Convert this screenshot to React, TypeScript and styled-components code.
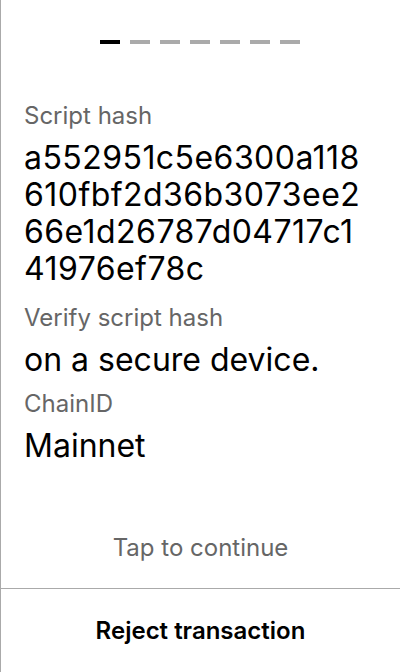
import styled, { createGlobalStyle } from 'styled-components';

const GlobalStyle = createGlobalStyle`
  html, body {
    margin: 0;
    padding: 0;
    background: #ffffff;
  }
  body {
    font-family: Inter, 'Noto Sans', sans-serif;
    -webkit-font-smoothing: antialiased;
  }
`;

const PAGE_COUNT = 7;
const ACTIVE_PAGE = 0;
const HASH_CHUNK = 18;

const scriptHash =
  'a552951c5e6300a118610fbf2d36b3073ee266e1d26787d04717c141976ef78c';

// the device shows the hash in fixed runs of 18 characters
const chunk = (s: string, n: number) => s.match(new RegExp(`.{1,${n}}`, 'g')) ?? [];

const fields = [
  { label: 'Verify script hash', value: 'on a secure device.' },
  { label: 'ChainID', value: 'Mainnet' },
];

const App = () => {
  return (
    <>
      <GlobalStyle />
      <Screen>
        <Pager>
          {Array.from({ length: PAGE_COUNT }).map((_, i) => (
            <PagerDash key={i} $active={i === ACTIVE_PAGE} />
          ))}
        </Pager>
        <Body>
          <Field>
            <FieldLabel>Script hash</FieldLabel>
            <HashValue>
              {chunk(scriptHash, HASH_CHUNK).map((line) => (
                <HashLine key={line}>{line}</HashLine>
              ))}
            </HashValue>
          </Field>
          {fields.map((f) => (
            <Field key={f.label}>
              <FieldLabel>{f.label}</FieldLabel>
              <FieldValue>{f.value}</FieldValue>
            </Field>
          ))}
        </Body>
        <Footer>
          <Hint>Tap to continue</Hint>
          <Divider />
          <RejectButton type="button">Reject transaction</RejectButton>
        </Footer>
      </Screen>
    </>
  );
};

const Screen = styled.div`
  width: 400px;
  height: 672px;
  box-sizing: border-box;
  border-left: 1px solid #aaaaaa;
  display: flex;
  flex-direction: column;
  background: #ffffff;
`;

const Pager = styled.div`
  display: flex;
  justify-content: center;
  gap: 10px;
  padding-top: 40px;
  margin-left: -1px;
`;

const PagerDash = styled.div<{ $active: boolean }>`
  width: 20px;
  height: 4px;
  background: ${(p) => (p.$active ? '#000000' : '#aaaaaa')};
`;

const Body = styled.div`
  flex: 1;
  display: flex;
  flex-direction: column;
  padding: 57px 23px 0;
  gap: 11px;
`;

const Field = styled.div`
  display: flex;
  flex-direction: column;
  gap: 9px;
`;

const FieldLabel = styled.div`
  font-size: 24px;
  line-height: 29px;
  color: #666666;
`;

const FieldValue = styled.div`
  font-size: 32px;
  line-height: 37px;
  color: #000000;
`;

const HashValue = styled.div`
  display: flex;
  flex-direction: column;
  padding-bottom: 5px;
`;

const HashLine = styled.div`
  font-size: 32px;
  line-height: 37px;
  letter-spacing: 0.45px;
  white-space: nowrap;
  color: #000000;
`;

const Footer = styled.div`
  display: flex;
  flex-direction: column;
  align-items: stretch;
`;

const Hint = styled.div`
  text-align: center;
  font-size: 24px;
  line-height: 29px;
  color: #666666;
  padding-bottom: 26px;
`;

const Divider = styled.div`
  height: 1px;
  background: #aaaaaa;
  margin-left: -1px;
`;

const RejectButton = styled.button`
  border: none;
  background: none;
  padding: 0;
  height: 83px;
  font-family: inherit;
  font-size: 24px;
  font-weight: 600;
  color: #000000;
  cursor: pointer;
`;

export default App;
